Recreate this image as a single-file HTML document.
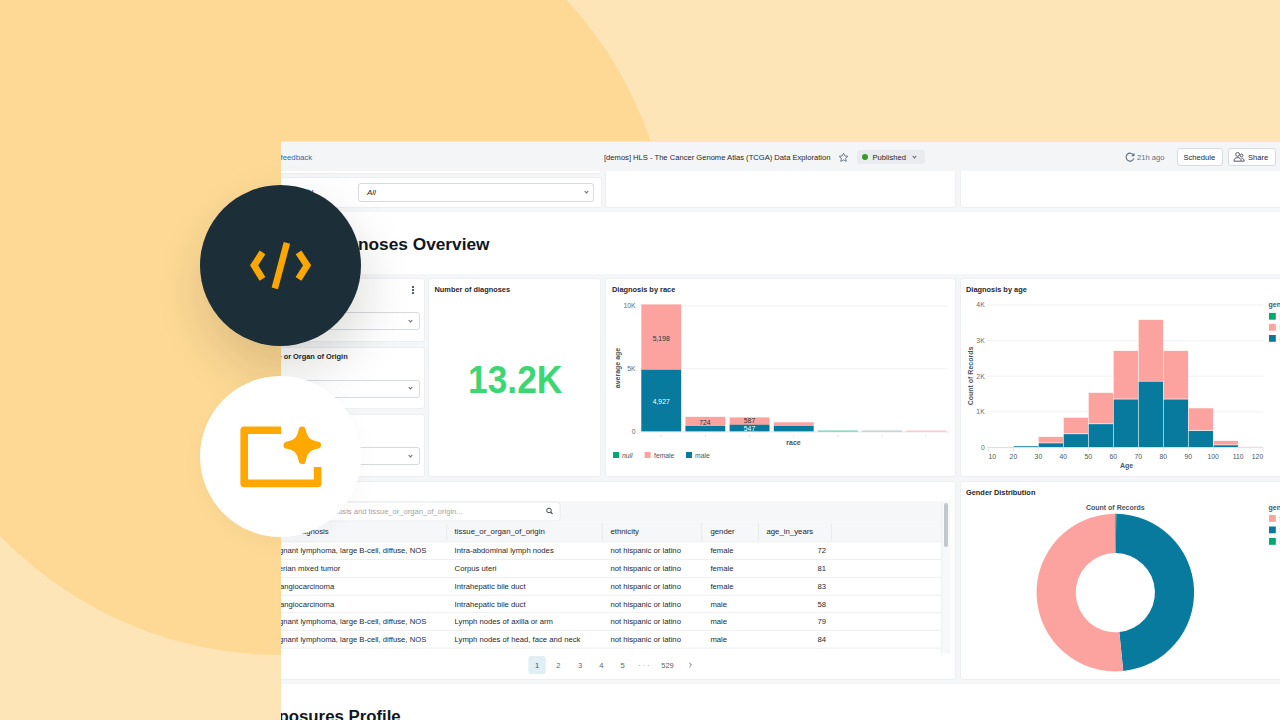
<!DOCTYPE html>
<html><head><meta charset="utf-8">
<style>
*{box-sizing:border-box;margin:0;padding:0}
html,body{width:1280px;height:720px;overflow:hidden}
body{position:relative;background:#FEE5B7;font-family:"Liberation Sans",sans-serif;color:#1f272d}
svg text{font-family:"Liberation Sans",sans-serif}
.abs{position:absolute}
#bigc{position:absolute;left:-108.8px;top:-124.4px;width:779.6px;height:779.6px;border-radius:50%;background:#FDD995}
#dash{position:absolute;left:0;top:0;width:1280px;height:720px;clip-path:inset(141px 0 0 281px);background:#F5F6F8}
.card{position:absolute;background:#fff;border:1px solid #EDEFF2;border-radius:3px}
.t{position:absolute;white-space:nowrap;line-height:1}
.ttl{position:absolute;white-space:nowrap;line-height:1;font-size:7.4px;font-weight:bold;color:#1f272d}
.dd{position:absolute;background:#fff;border:1px solid #D5DBE1;border-radius:3px}
.chev{position:absolute;width:3.5px;height:3.5px;border-right:1px solid #56626C;border-bottom:1px solid #56626C;transform:rotate(45deg)}
#c1{position:absolute;left:199.8px;top:185px;width:161px;height:161px;border-radius:50%;background:#1C2F39;box-shadow:4px 24px 50px rgba(20,20,0,.15)}
#c2{position:absolute;left:199.8px;top:376px;width:161px;height:161px;border-radius:50%;background:#fff;box-shadow:0 6px 24px rgba(20,20,0,.03)}
.btn{position:absolute;background:#fff;border:1px solid #D5DBE1;border-radius:3px}
</style></head><body>
<div id="bigc"></div>
<div id="dash">
  <!-- top row cards -->
  <div class="card" style="left:270px;top:150px;width:331.8px;height:23.7px"></div>
  <div class="card" style="left:270px;top:177.2px;width:331.8px;height:30.8px"></div>
  <div class="t" style="left:283px;top:188px;font-size:8px;color:#1f272d">Ethnicity</div>
  <div class="dd" style="left:358px;top:183.3px;width:235.6px;height:18.3px"></div>
  <div class="t" style="left:367px;top:188.5px;font-size:8px;font-style:italic;color:#1f272d">All</div>
  <div class="chev" style="left:584.5px;top:189.8px;width:3px;height:3px"></div>
  <div class="card" style="left:605.3px;top:150px;width:350.3px;height:58px"></div>
  <div class="card" style="left:959.6px;top:150px;width:330.4px;height:58px"></div>

  <!-- header bar -->
  <div class="abs" style="left:281px;top:141px;width:999px;height:29.7px;background:#F4F5F7;border-top:1.6px solid #E4E7EB"></div>
  <div class="t" id="fb" style="left:280.5px;top:154.2px;font-size:7.8px;color:#1E70A6">feedback</div>
  <div class="t" id="title" style="left:604px;top:153.9px;font-size:7.6px;color:#1f272d">[demos] HLS - The Cancer Genome Atlas (TCGA) Data Exploration</div>
  <svg class="abs" style="left:838px;top:151.5px" width="11" height="11" viewBox="0 0 24 24"><path d="M12 2.5l2.9 6.1 6.6.8-4.9 4.5 1.3 6.6L12 17.2l-5.9 3.3 1.3-6.6-4.9-4.5 6.6-.8z" fill="none" stroke="#5F7281" stroke-width="2" stroke-linejoin="round"/></svg>
  <div class="abs" style="left:857px;top:150px;width:68px;height:14px;background:#E9EBEE;border-radius:3px"></div>
  <div class="abs" style="left:861.8px;top:154px;width:6.2px;height:6.2px;background:#3A9A2C;border-radius:50%"></div>
  <div class="t" id="pub" style="left:872.5px;top:154.2px;font-size:7.6px;color:#1f272d">Published</div>
  <div class="chev" style="left:913px;top:155px;width:3px;height:3px"></div>
  <svg class="abs" style="left:1124px;top:151px" width="12" height="12" viewBox="0 0 12 12"><path d="M9.6,4.2 A4,4 0 1 0 9.9,7.4" fill="none" stroke="#5F7281" stroke-width="1.1"/><path d="M10.2,2.2 L10.2,4.9 L7.5,4.9" fill="#5F7281" stroke="#5F7281" stroke-width="0.6" stroke-linejoin="round"/></svg>
  <div class="t" id="ago" style="left:1137px;top:154.2px;font-size:7.6px;color:#5F7281">21h ago</div>
  <div class="btn" style="left:1177.2px;top:148px;width:45.5px;height:18px"></div>
  <div class="t" id="sch" style="left:1183.5px;top:154.2px;font-size:7.6px;color:#1f272d">Schedule</div>
  <div class="btn" style="left:1227.5px;top:148px;width:48.3px;height:18px"></div>
  <svg class="abs" style="left:1233px;top:151px" width="12" height="12" viewBox="0 0 12 12"><circle cx="4.6" cy="3.4" r="1.9" fill="none" stroke="#445" stroke-width="0.9"/><path d="M1,10.2 C1,7.6 2.6,6.6 4.6,6.6 C6.6,6.6 8.2,7.6 8.2,10.2 Z" fill="none" stroke="#445" stroke-width="0.9" stroke-linejoin="round"/><circle cx="8.6" cy="4.6" r="1.4" fill="none" stroke="#445" stroke-width="0.9"/><path d="M8.6,7.4 C10.2,7.4 11.2,8.4 11.2,10.2 L8.6,10.2" fill="none" stroke="#445" stroke-width="0.9"/></svg>
  <div class="t" id="share" style="left:1248px;top:154.2px;font-size:7.6px;color:#1f272d">Share</div>

  <!-- section title -->
  <div class="abs" style="left:270px;top:211.8px;width:1010px;height:62.5px;background:#fff"></div>
  <div class="t" id="h1" style="left:320.5px;top:236.3px;font-size:17.3px;font-weight:bold;color:#11171C">Diagnoses Overview</div>

  <!-- row cards -->
  <div class="card" style="left:270px;top:278.3px;width:154.8px;height:63.4px"></div>
  <div class="abs" style="left:412px;top:286.3px;width:1.7px;height:1.7px;background:#3D4852;border-radius:50%;box-shadow:0 3px 0 #3D4852,0 6px 0 #3D4852"></div>
  <div class="dd" style="left:270px;top:312.2px;width:149.8px;height:18.2px"></div>
  <div class="chev" style="left:409.3px;top:318.5px;width:3px;height:3px"></div>
  <div class="card" style="left:270px;top:346.7px;width:154.8px;height:62.1px"></div>
  <div class="ttl" id="org" style="left:258.3px;top:353px">Tissue or Organ of Origin</div>
  <div class="dd" style="left:270px;top:379.6px;width:149.8px;height:18.2px"></div>
  <div class="chev" style="left:409.3px;top:386px;width:3px;height:3px"></div>
  <div class="card" style="left:270px;top:413.8px;width:154.8px;height:63.2px"></div>
  <div class="dd" style="left:270px;top:447px;width:149.8px;height:18px"></div>
  <div class="chev" style="left:409.3px;top:453.5px;width:3px;height:3px"></div>

  <div class="card" style="left:428.3px;top:278.3px;width:172.9px;height:198.7px"></div>
  <div class="ttl" id="nd" style="left:434.5px;top:285.5px">Number of diagnoses</div>
  <div class="t" id="kpi" style="left:467.5px;top:361px;font-size:38px;transform-origin:0 0;transform:scaleX(0.93);font-weight:bold;color:#3CD675">13.2K</div>

  <div class="card" style="left:605.3px;top:278.3px;width:350.3px;height:198.9px"></div>
  <div class="ttl" id="dr" style="left:612px;top:285.5px">Diagnosis by race</div>
  <div class="card" style="left:959.6px;top:278.3px;width:330.4px;height:198.9px"></div>
  <div class="ttl" id="da" style="left:966px;top:285.5px">Diagnosis by age</div>

  <div class="card" style="left:270px;top:481.2px;width:685.6px;height:198.8px"></div>
  <div class="card" style="left:959.6px;top:481.2px;width:330.4px;height:198.8px"></div>
  <div class="ttl" id="gd" style="left:966px;top:488.5px">Gender Distribution</div>

  <svg class="abs" style="left:0;top:0" width="1280" height="720">
<g fill="#5F6B75" font-size="6.8" text-anchor="end">
<text x="635.6" y="308.4">10K</text>
<text x="635.6" y="371.2">5K</text>
<text x="635.6" y="434.0">0</text>
</g>
<line x1="640" x2="949" y1="306.0" y2="306.0" stroke="#ECEEF1" stroke-width="0.8"/>
<line x1="640" x2="949" y1="368.8" y2="368.8" stroke="#ECEEF1" stroke-width="0.8"/>
<rect x="641.3" y="304.4" width="39.9" height="65.3" fill="#FCA3A0"/>
<rect x="641.3" y="369.7" width="39.9" height="61.9" fill="#077A9D"/>
<rect x="685.4" y="416.8" width="39.9" height="9.2" fill="#FCA3A0"/>
<rect x="685.4" y="426.0" width="39.9" height="5.6" fill="#077A9D"/>
<rect x="729.6" y="417.4" width="39.9" height="7.4" fill="#FCA3A0"/>
<rect x="729.6" y="424.7" width="39.9" height="6.9" fill="#077A9D"/>
<rect x="773.8" y="422.3" width="39.9" height="3.7" fill="#FCA3A0"/>
<rect x="773.8" y="426.0" width="39.9" height="5.6" fill="#077A9D"/>
<rect x="817.9" y="430.7" width="39.9" height="0.9" fill="#00A972"/>
<rect x="862.0" y="430.7" width="39.9" height="0.9" fill="#9AA5AD"/>
<rect x="906.2" y="430.7" width="39.9" height="0.9" fill="#FCA3A0"/>
<line x1="640" x2="949" y1="431.90000000000003" y2="431.90000000000003" stroke="#D8DDE2" stroke-width="0.8"/>
<line x1="661.2" x2="661.2" y1="434.6" y2="437.1" stroke="#D8DDE2" stroke-width="0.8"/>
<line x1="705.4" x2="705.4" y1="434.6" y2="437.1" stroke="#D8DDE2" stroke-width="0.8"/>
<line x1="749.5" x2="749.5" y1="434.6" y2="437.1" stroke="#D8DDE2" stroke-width="0.8"/>
<line x1="793.7" x2="793.7" y1="434.6" y2="437.1" stroke="#D8DDE2" stroke-width="0.8"/>
<line x1="837.9" x2="837.9" y1="434.6" y2="437.1" stroke="#D8DDE2" stroke-width="0.8"/>
<line x1="882.0" x2="882.0" y1="434.6" y2="437.1" stroke="#D8DDE2" stroke-width="0.8"/>
<line x1="926.1" x2="926.1" y1="434.6" y2="437.1" stroke="#D8DDE2" stroke-width="0.8"/>
<g font-size="6.8" text-anchor="middle">
<text x="661.2" y="340.6" fill="#2B3338">5,198</text>
<text x="661.2" y="403.6" fill="#fff">4,927</text>
<text x="704.9" y="424.6" fill="#2B3338">724</text>
<text x="749.5" y="423" fill="#2B3338">587</text>
<text x="749.5" y="431.3" fill="#fff">547</text>
</g>
<text x="0" y="0" transform="translate(620,368) rotate(-90)" font-size="7" font-weight="bold" fill="#4A5560" text-anchor="middle">average age</text>
<text x="793.5" y="445.2" font-size="7" font-weight="bold" fill="#4A5560" text-anchor="middle">race</text>
<rect x="613" y="452" width="6" height="6" fill="#00A972"/><text x="622" y="457.6" font-size="6.8" font-style="italic" fill="#4A5560">null</text>
<rect x="644.6" y="452" width="6" height="6" fill="#FCA3A0"/><text x="654" y="457.6" font-size="6.8" fill="#4A5560">female</text>
<rect x="686" y="452" width="6" height="6" fill="#077A9D"/><text x="695" y="457.6" font-size="6.8" fill="#4A5560">male</text>
<g fill="#5F6B75" font-size="6.8" text-anchor="end">
<text x="984.7" y="307.4">4K</text>
<text x="984.7" y="343.0">3K</text>
<text x="984.7" y="378.6">2K</text>
<text x="984.7" y="414.2">1K</text>
<text x="984.7" y="449.8">0</text>
</g>
<line x1="987" x2="1263.2" y1="305.0" y2="305.0" stroke="#ECEEF1" stroke-width="0.8"/>
<line x1="987" x2="1263.2" y1="340.6" y2="340.6" stroke="#ECEEF1" stroke-width="0.8"/>
<line x1="987" x2="1263.2" y1="376.2" y2="376.2" stroke="#ECEEF1" stroke-width="0.8"/>
<line x1="987" x2="1263.2" y1="411.8" y2="411.8" stroke="#ECEEF1" stroke-width="0.8"/>
<rect x="988.40" y="447.0" width="24.98" height="0.40" fill="#077A9D" stroke="#fff" stroke-width="0.5"/>
<rect x="1013.38" y="446.0" width="24.98" height="1.40" fill="#077A9D" stroke="#fff" stroke-width="0.5"/>
<rect x="1038.36" y="436.7" width="24.98" height="6.30" fill="#FCA3A0" stroke="#fff" stroke-width="0.5"/>
<rect x="1038.36" y="443" width="24.98" height="4.40" fill="#077A9D" stroke="#fff" stroke-width="0.5"/>
<rect x="1063.34" y="417.4" width="24.98" height="16.50" fill="#FCA3A0" stroke="#fff" stroke-width="0.5"/>
<rect x="1063.34" y="433.9" width="24.98" height="13.50" fill="#077A9D" stroke="#fff" stroke-width="0.5"/>
<rect x="1088.32" y="392.6" width="24.98" height="31.30" fill="#FCA3A0" stroke="#fff" stroke-width="0.5"/>
<rect x="1088.32" y="423.9" width="24.98" height="23.50" fill="#077A9D" stroke="#fff" stroke-width="0.5"/>
<rect x="1113.30" y="350.7" width="24.98" height="48.40" fill="#FCA3A0" stroke="#fff" stroke-width="0.5"/>
<rect x="1113.30" y="399.1" width="24.98" height="48.30" fill="#077A9D" stroke="#fff" stroke-width="0.5"/>
<rect x="1138.28" y="319.7" width="24.98" height="61.50" fill="#FCA3A0" stroke="#fff" stroke-width="0.5"/>
<rect x="1138.28" y="381.2" width="24.98" height="66.20" fill="#077A9D" stroke="#fff" stroke-width="0.5"/>
<rect x="1163.26" y="350.7" width="24.98" height="48.40" fill="#FCA3A0" stroke="#fff" stroke-width="0.5"/>
<rect x="1163.26" y="399.1" width="24.98" height="48.30" fill="#077A9D" stroke="#fff" stroke-width="0.5"/>
<rect x="1188.24" y="408" width="24.98" height="22.75" fill="#FCA3A0" stroke="#fff" stroke-width="0.5"/>
<rect x="1188.24" y="430.75" width="24.98" height="16.65" fill="#077A9D" stroke="#fff" stroke-width="0.5"/>
<rect x="1213.22" y="440.7" width="24.98" height="4.30" fill="#FCA3A0" stroke="#fff" stroke-width="0.5"/>
<rect x="1213.22" y="445" width="24.98" height="2.40" fill="#077A9D" stroke="#fff" stroke-width="0.5"/>
<rect x="1238.20" y="446.8" width="24.98" height="0.40" fill="#FCA3A0" stroke="#fff" stroke-width="0.5"/>
<rect x="1238.20" y="447.2" width="24.98" height="0.20" fill="#077A9D" stroke="#fff" stroke-width="0.5"/>
<line x1="987" x2="1263.2" y1="447.7" y2="447.7" stroke="#D8DDE2" stroke-width="0.8"/>
<line x1="988.4" x2="988.4" y1="448.4" y2="451.4" stroke="#D8DDE2" stroke-width="0.8"/>
<line x1="1013.4" x2="1013.4" y1="448.4" y2="451.4" stroke="#D8DDE2" stroke-width="0.8"/>
<line x1="1038.4" x2="1038.4" y1="448.4" y2="451.4" stroke="#D8DDE2" stroke-width="0.8"/>
<line x1="1063.3" x2="1063.3" y1="448.4" y2="451.4" stroke="#D8DDE2" stroke-width="0.8"/>
<line x1="1088.3" x2="1088.3" y1="448.4" y2="451.4" stroke="#D8DDE2" stroke-width="0.8"/>
<line x1="1113.3" x2="1113.3" y1="448.4" y2="451.4" stroke="#D8DDE2" stroke-width="0.8"/>
<line x1="1138.3" x2="1138.3" y1="448.4" y2="451.4" stroke="#D8DDE2" stroke-width="0.8"/>
<line x1="1163.3" x2="1163.3" y1="448.4" y2="451.4" stroke="#D8DDE2" stroke-width="0.8"/>
<line x1="1188.2" x2="1188.2" y1="448.4" y2="451.4" stroke="#D8DDE2" stroke-width="0.8"/>
<line x1="1213.2" x2="1213.2" y1="448.4" y2="451.4" stroke="#D8DDE2" stroke-width="0.8"/>
<line x1="1238.2" x2="1238.2" y1="448.4" y2="451.4" stroke="#D8DDE2" stroke-width="0.8"/>
<line x1="1263.2" x2="1263.2" y1="448.4" y2="451.4" stroke="#D8DDE2" stroke-width="0.8"/>
<g fill="#4A5560" font-size="6.8" text-anchor="middle">
<text x="988.4" y="458.8" text-anchor="start">10</text>
<text x="1013.4" y="458.8">20</text>
<text x="1038.4" y="458.8">30</text>
<text x="1063.3" y="458.8">40</text>
<text x="1088.3" y="458.8">50</text>
<text x="1113.3" y="458.8">60</text>
<text x="1138.3" y="458.8">70</text>
<text x="1163.3" y="458.8">80</text>
<text x="1188.2" y="458.8">90</text>
<text x="1213.2" y="458.8">100</text>
<text x="1238.2" y="458.8">110</text>
<text x="1263.2" y="458.8" text-anchor="end">120</text>
</g>
<text transform="translate(972.5,376) rotate(-90)" font-size="7" font-weight="bold" fill="#4A5560" text-anchor="middle">Count of Records</text>
<text x="1126.5" y="467.7" font-size="7" font-weight="bold" fill="#4A5560" text-anchor="middle">Age</text>
<text x="1268.5" y="306.5" font-size="7" font-weight="bold" fill="#4A5560">gender</text>
<rect x="1269" y="312.9" width="6.8" height="6.8" fill="#00A972"/><text x="1279.5" y="318.6" font-size="6.8" fill="#4A5560">null</text>
<rect x="1269" y="323.9" width="6.8" height="6.8" fill="#FCA3A0"/><text x="1279.5" y="329.7" font-size="6.8" fill="#4A5560">female</text>
<rect x="1269" y="335.0" width="6.8" height="6.8" fill="#077A9D"/><text x="1279.5" y="340.7" font-size="6.8" fill="#4A5560">male</text>
<path d="M1116.26,513.81 A78.8,78.8 0 0 1 1123.26,671.00 L1119.30,632.00 A39.6,39.6 0 0 0 1115.78,553.00 Z" fill="#077A9D"/>
<path d="M1123.26,671.00 A78.8,78.8 0 1 1 1115.30,513.80 L1115.30,553.00 A39.6,39.6 0 1 0 1119.30,632.00 Z" fill="#FCA3A0"/>
<path d="M1115.30,513.80 A78.8,78.8 0 0 1 1116.26,513.81 L1115.78,553.00 A39.6,39.6 0 0 0 1115.30,553.00 Z" fill="#00A972"/>
<text x="1115.3" y="510" font-size="7" font-weight="bold" fill="#4A5560" text-anchor="middle">Count of Records</text>
<text x="1268.5" y="509.5" font-size="7" font-weight="bold" fill="#4A5560">gender</text>
<rect x="1269" y="515.0" width="6.8" height="6.8" fill="#FCA3A0"/><text x="1279.5" y="520.7" font-size="6.8" fill="#4A5560">female</text>
<rect x="1269" y="526.5" width="6.8" height="6.8" fill="#077A9D"/><text x="1279.5" y="532.2" font-size="6.8" fill="#4A5560">male</text>
<rect x="1269" y="538.0" width="6.8" height="6.8" fill="#00A972"/><text x="1279.5" y="543.7" font-size="6.8" fill="#4A5560">null</text>
<rect x="270" y="501" width="671.3" height="20.7" fill="#F6F7F9"/>
<rect x="270" y="502" width="290" height="19" rx="3" fill="#fff" stroke="#E1E5E9" stroke-width="0.8"/>
<text x="462.7" y="513.8" font-size="7.6" fill="#9AA5AE" text-anchor="end">Search diagnosis and tissue_or_organ_of_origin...</text>
<circle cx="549" cy="510.5" r="2.3" fill="none" stroke="#3A4650" stroke-width="1"/><line x1="550.7" y1="512.2" x2="552.5" y2="514" stroke="#3A4650" stroke-width="1.1"/>
<rect x="270" y="521.7" width="671.3" height="20.1" fill="#F6F7F9"/>
<line x1="446.6" x2="446.6" y1="523.5" y2="540" stroke="#E3E6EA" stroke-width="0.8"/>
<line x1="602.2" x2="602.2" y1="523.5" y2="540" stroke="#E3E6EA" stroke-width="0.8"/>
<line x1="701.7" x2="701.7" y1="523.5" y2="540" stroke="#E3E6EA" stroke-width="0.8"/>
<line x1="758.5" x2="758.5" y1="523.5" y2="540" stroke="#E3E6EA" stroke-width="0.8"/>
<line x1="831.4" x2="831.4" y1="523.5" y2="540" stroke="#E3E6EA" stroke-width="0.8"/>
<g font-size="7.8" fill="#1F272D">
<text x="328.7" y="534.4" text-anchor="end">diagnosis</text>
<text x="454.6" y="534.4">tissue_or_organ_of_origin</text>
<text x="610.4" y="534.4">ethnicity</text>
<text x="710.4" y="534.4">gender</text>
<text x="766.4" y="534.4">age_in_years</text>
</g>
<line x1="270" x2="941.3" y1="541.8" y2="541.8" stroke="#E8EBEE" stroke-width="0.8"/>
<line x1="270" x2="941.3" y1="559.5" y2="559.5" stroke="#E8EBEE" stroke-width="0.8"/>
<line x1="270" x2="941.3" y1="577.4" y2="577.4" stroke="#E8EBEE" stroke-width="0.8"/>
<line x1="270" x2="941.3" y1="595.3" y2="595.3" stroke="#E8EBEE" stroke-width="0.8"/>
<line x1="270" x2="941.3" y1="612.6" y2="612.6" stroke="#E8EBEE" stroke-width="0.8"/>
<line x1="270" x2="941.3" y1="630.5" y2="630.5" stroke="#E8EBEE" stroke-width="0.8"/>
<line x1="270" x2="941.3" y1="648.1" y2="648.1" stroke="#E8EBEE" stroke-width="0.8"/>
<g font-size="7.7" fill="#1F272D">
<text x="426.3" y="553.4" text-anchor="end">Malignant lymphoma, large B-cell, diffuse, NOS</text>
<text x="454.6" y="553.4">Intra-abdominal lymph nodes</text>
<text x="610.4" y="553.4">not hispanic or latino</text>
<text x="710.4" y="553.4">female</text>
<text x="826" y="553.4" text-anchor="end">72</text>
<text x="340.3" y="571.2" text-anchor="end">Müllerian mixed tumor</text>
<text x="454.6" y="571.2">Corpus uteri</text>
<text x="610.4" y="571.2">not hispanic or latino</text>
<text x="710.4" y="571.2">female</text>
<text x="826" y="571.2" text-anchor="end">81</text>
<text x="334.3" y="589.1" text-anchor="end">Cholangiocarcinoma</text>
<text x="454.6" y="589.1">Intrahepatic bile duct</text>
<text x="610.4" y="589.1">not hispanic or latino</text>
<text x="710.4" y="589.1">female</text>
<text x="826" y="589.1" text-anchor="end">83</text>
<text x="334.3" y="606.8" text-anchor="end">Cholangiocarcinoma</text>
<text x="454.6" y="606.8">Intrahepatic bile duct</text>
<text x="610.4" y="606.8">not hispanic or latino</text>
<text x="710.4" y="606.8">male</text>
<text x="826" y="606.8" text-anchor="end">58</text>
<text x="426.3" y="624.3" text-anchor="end">Malignant lymphoma, large B-cell, diffuse, NOS</text>
<text x="454.6" y="624.3">Lymph nodes of axilla or arm</text>
<text x="610.4" y="624.3">not hispanic or latino</text>
<text x="710.4" y="624.3">male</text>
<text x="826" y="624.3" text-anchor="end">79</text>
<text x="426.3" y="642.1" text-anchor="end">Malignant lymphoma, large B-cell, diffuse, NOS</text>
<text x="454.6" y="642.1">Lymph nodes of head, face and neck</text>
<text x="610.4" y="642.1">not hispanic or latino</text>
<text x="710.4" y="642.1">male</text>
<text x="826" y="642.1" text-anchor="end">84</text>
</g>
<rect x="941.3" y="501" width="9.3" height="152.5" fill="#F7F8F9"/>
<line x1="941.5" x2="941.5" y1="501" y2="653.5" stroke="#E8EBEE" stroke-width="0.6"/>
<rect x="944" y="503" width="4" height="44" rx="2" fill="#C2C7CC"/>

<rect x="528.4" y="656" width="17.3" height="18" rx="2.5" fill="#E2EEF6"/>
<g font-size="7.6" fill="#5A6670" text-anchor="middle">
<text x="537" y="667.8" fill="#1E5F8C">1</text>
<text x="558.3" y="667.8">2</text>
<text x="580" y="667.8">3</text>
<text x="601.3" y="667.8">4</text>
<text x="622.6" y="667.8">5</text>
<circle cx="639.7" cy="665.5" r="0.55" fill="#9AA5AE"/><circle cx="644" cy="665.5" r="0.55" fill="#9AA5AE"/><circle cx="648.3" cy="665.5" r="0.55" fill="#9AA5AE"/>
<text x="667.5" y="667.8">529</text>
</g>
<path d="M689.3,662.8 l2.2,2.2 l-2.2,2.2" fill="none" stroke="#5A6670" stroke-width="0.9"/>
  </svg>

  <div class="abs" style="left:270px;top:683.7px;width:1010px;height:40px;background:#fff"></div>
  <div class="t" id="h2" style="left:258px;top:708.5px;font-size:16.8px;font-weight:bold;color:#11171C">Exposures Profile</div>
</div>
<div id="c1">
  <svg class="abs" style="left:0;top:0" width="161" height="161" viewBox="199.8 185 161 161">
    <polyline points="262.3,252.3 253.9,265.4 262.3,278.9" fill="none" stroke="#FBA700" stroke-width="6.8" stroke-linejoin="miter" stroke-miterlimit="10"/>
    <polyline points="298.3,252.3 306.9,265.4 298.3,278.9" fill="none" stroke="#FBA700" stroke-width="6.8" stroke-linejoin="miter" stroke-miterlimit="10"/>
    <line x1="286.7" y1="242.9" x2="274.6" y2="288.4" stroke="#FBA700" stroke-width="6.6"/>
  </svg>
</div>
<div id="c2">
  <svg class="abs" style="left:0;top:0" width="161" height="161" viewBox="199.8 376 161 161">
    <path d="M280.9,430.2 H244 V483.4 H317.4 V466.9" fill="none" stroke="#FFA800" stroke-width="7.6" stroke-linejoin="round"/>
    <path d="M302,430 C303.8,439.5 307,442.8 317.3,445.2 C307,447.6 303.8,451 302,460.6 C300.2,451 297,447.6 286.8,445.2 C297,442.8 300.2,439.5 302,430 Z" fill="#FFA800" stroke="#FFA800" stroke-width="7" stroke-linejoin="round"/>
  </svg>
</div>
</body></html>
